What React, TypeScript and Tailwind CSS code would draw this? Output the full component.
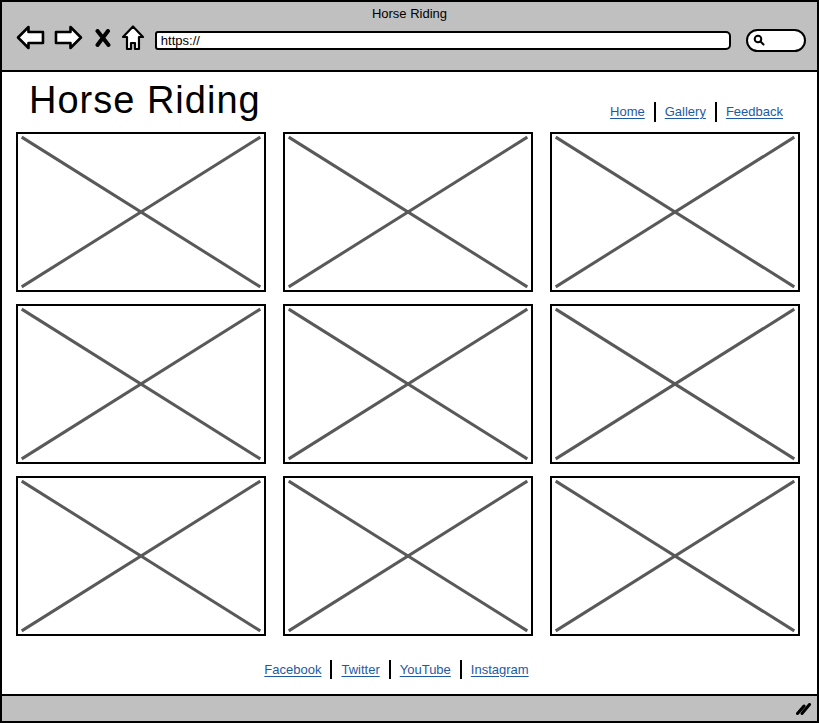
import * as React from "react";

const links = ["Home", "Gallery", "Feedback"];
const social = ["Facebook", "Twitter", "YouTube", "Instagram"];

function Placeholder() {
  return (
    <div className="h-[160px] w-[250px] border-2 border-black bg-white">
      <svg className="h-full w-full" viewBox="0 0 100 100" preserveAspectRatio="none">
        <line x1="1.5" y1="2" x2="98.5" y2="98" stroke="#595959" strokeWidth="3" vectorEffect="non-scaling-stroke" />
        <line x1="98.5" y1="2" x2="1.5" y2="98" stroke="#595959" strokeWidth="3" vectorEffect="non-scaling-stroke" />
      </svg>
    </div>
  );
}

function LinkRow({ items, sepHeight }: { items: string[]; sepHeight: string }) {
  return (
    <div className="flex items-center gap-[9px] text-[13px] leading-[16px]">
      {items.map((item, i) => (
        <React.Fragment key={item}>
          {i > 0 ? <span className={`w-[2px] bg-black ${sepHeight}`} /> : null}
          <a className="text-[#1d5aa3] underline underline-offset-[2px]" href="#">
            {item}
          </a>
        </React.Fragment>
      ))}
    </div>
  );
}

export default function App() {
  return (
    <div className="flex h-[723px] w-[819px] flex-col overflow-hidden border-2 border-black bg-white font-['Liberation_Sans',Arial,sans-serif] text-black">
      {/* browser chrome */}
      <header className="flex h-[70px] shrink-0 flex-col border-b-2 border-black bg-[#c0c0c0]">
        <div className="pt-[4px] text-center text-[13px] leading-[16px]">Horse Riding</div>
        <div className="mt-[4px] flex h-[28px] items-center pl-[14px] pr-[11px]">
          <svg width="29" height="25" viewBox="0 0 29 25" className="-mt-[5px]">
            <path d="M2 12.5 L12.5 2 L12.5 7 L27 7 L27 18 L12.5 18 L12.5 23 Z" fill="#fff" stroke="#000" strokeWidth="2.6" strokeLinejoin="round" />
          </svg>
          <svg width="29" height="25" viewBox="0 0 29 25" className="-mt-[5px] ml-[9px]">
            <path d="M27 12.5 L16.5 2 L16.5 7 L2 7 L2 18 L16.5 18 L16.5 23 Z" fill="#fff" stroke="#000" strokeWidth="2.6" strokeLinejoin="round" />
          </svg>
          <svg width="16" height="18" viewBox="0 0 16 18" className="-mt-[5px] ml-[12px]">
            <path d="M2.5 2 L13.5 16 M13 2 L2.5 16" stroke="#000" strokeWidth="4" strokeLinecap="round" />
          </svg>
          <svg width="24" height="26" viewBox="0 0 24 26" className="-mt-[4px] ml-[10px]">
            <path d="M12 1.5 L22 12 L18 12 L18 24 L14 24 L14 18 L10 18 L10 24 L6 24 L6 12 L2 12 Z" fill="#fff" stroke="#000" strokeWidth="2.2" strokeLinejoin="round" />
          </svg>
          <div className="ml-[10px] flex h-[19px] w-[577px] items-center rounded-[3px] rounded-r-[5px] border-2 border-black bg-white pl-[4px] text-[13px] leading-none">
            https://
          </div>
          <div className="ml-[15px] flex h-[23px] w-[60px] items-center rounded-full border-2 border-black bg-white pl-[5px]">
            <svg width="12" height="12" viewBox="0 0 12 12">
              <circle cx="5" cy="5" r="3.3" fill="none" stroke="#000" strokeWidth="2" />
              <path d="M7.5 7.5 L10.5 10.5" stroke="#000" strokeWidth="2" strokeLinecap="round" />
            </svg>
          </div>
        </div>
      </header>

      {/* page */}
      <main className="flex flex-1 flex-col">
        <div className="flex items-start justify-between pl-[27px] pr-[34px] pt-[9px]">
          <h1 className="h-[38px] text-[38px] leading-[38px] tracking-[1px]">Horse Riding</h1>
          <div className="mt-[21px]">
            <LinkRow items={links} sepHeight="h-[20px]" />
          </div>
        </div>

        <div className="mt-[10px] grid grid-cols-[repeat(3,250px)] gap-x-[17px] gap-y-[12px] pl-[14px]">
          {Array.from({ length: 9 }).map((_, i) => (
            <Placeholder key={i} />
          ))}
        </div>

        <div className="mt-[24px] flex justify-center pr-[26px]">
          <LinkRow items={social} sepHeight="h-[19px]" />
        </div>
      </main>

      {/* status bar */}
      <footer className="flex h-[27px] shrink-0 items-center justify-end border-t-2 border-black bg-[#c0c0c0] pr-[5px]">
        <svg width="16" height="12" viewBox="0 0 16 12">
          <path d="M1.5 10.5 L8 3 M6 10.5 L13.5 1.5" stroke="#000" strokeWidth="3" strokeLinecap="round" />
        </svg>
      </footer>
    </div>
  );
}
